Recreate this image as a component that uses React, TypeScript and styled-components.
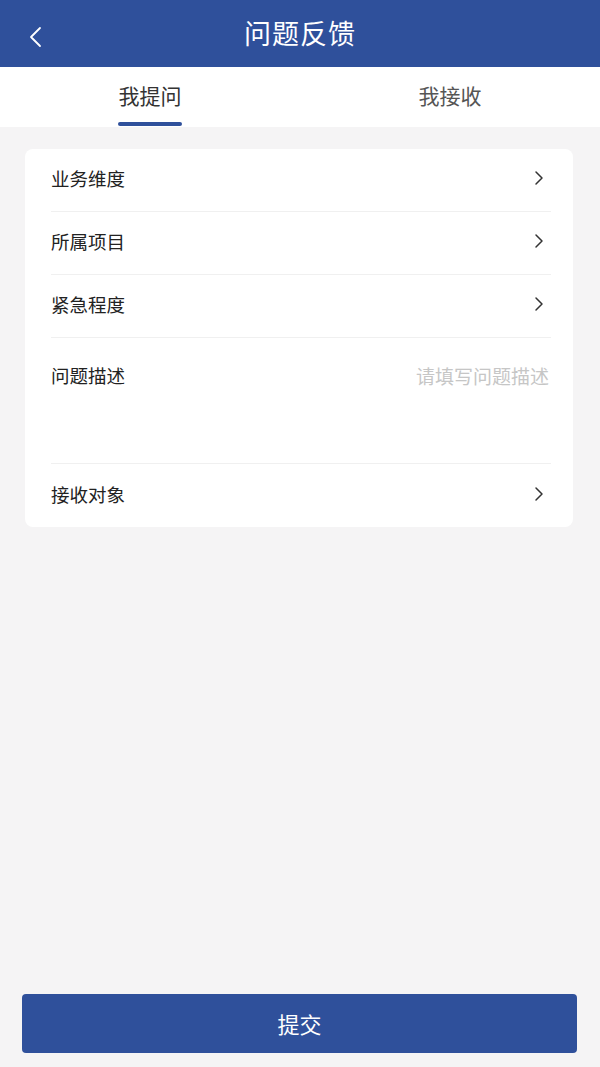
import React, {useState} from 'react';
import styled, {createGlobalStyle} from "styled-components";

const GlobalStyle = createGlobalStyle`
  * { box-sizing: border-box; }
  body {
    margin: 0;
    font-family: "Noto Sans CJK SC", "Noto Sans", sans-serif;
    background: #f5f4f5;
  }
`

type RowType = {
    label: string;
    arrow?: boolean;
    placeholder?: string;
}

const rows: RowType[] = [
    {label: '业务维度', arrow: true},
    {label: '所属项目', arrow: true},
    {label: '紧急程度', arrow: true},
    {label: '问题描述', placeholder: '请填写问题描述'},
    {label: '接收对象', arrow: true},
]

const Chevron = () => (
    <svg width="12" height="16" viewBox="0 0 12 16" fill="none">
        <path d="M3 2 L9 8 L3 14" stroke="#333" strokeWidth="1.5" strokeLinecap="round" strokeLinejoin="round"/>
    </svg>
)

const App = () => {
    const [tab, setTab] = useState(0);

    return (
        <Page>
            <GlobalStyle/>
            <Header>
                <BackBtn>
                    <svg width="18" height="22" viewBox="0 0 18 22" fill="none">
                        <path d="M13 2 L4 11 L13 20" stroke="#fff" strokeWidth="1.8" strokeLinecap="round" strokeLinejoin="round"/>
                    </svg>
                </BackBtn>
                <Title>问题反馈</Title>
            </Header>
            <Tabs>
                {['我提问', '我接收'].map((t, i) => (
                    <Tab key={t} active={i === tab} onClick={() => setTab(i)}>{t}</Tab>
                ))}
            </Tabs>
            <Card>
                {rows.map((row, i) => (
                    <Row key={row.label} tall={!!row.placeholder} last={i === rows.length - 1}>
                        <Label>{row.label}</Label>
                        {row.placeholder && <Placeholder>{row.placeholder}</Placeholder>}
                        {row.arrow && <Chevron/>}
                    </Row>
                ))}
            </Card>
            <Footer>
                <SubmitBtn>提交</SubmitBtn>
            </Footer>
        </Page>
    );
};

export default App;

const Page = styled.div`
  min-height: 1067px;
  display: flex;
  flex-direction: column;
  background: #f5f4f5;
`
const Header = styled.div`
  height: 67px;
  background: #2f509b;
  display: flex;
  align-items: center;
  justify-content: center;
  position: relative;
  padding-bottom: 2px;
`
const BackBtn = styled.div`
  position: absolute;
  left: 27px;
  top: 26px;
  display: flex;
`
const Title = styled.h1`
  margin: 0;
  font-size: 27px;
  font-weight: 400;
  color: #ffffff;
  letter-spacing: 1px;
`
const Tabs = styled.div`
  height: 60px;
  background: #ffffff;
  display: flex;
`
const Tab = styled.div<{ active: boolean }>`
  flex: 1;
  display: flex;
  align-items: center;
  justify-content: center;
  padding-bottom: 4px;
  font-size: 21px;
  color: ${p => p.active ? '#333333' : '#555555'};
  position: relative;
  cursor: pointer;

  &::after {
    content: '';
    display: ${p => p.active ? 'block' : 'none'};
    position: absolute;
    bottom: 1px;
    left: 50%;
    transform: translateX(-50%);
    width: 64px;
    height: 4px;
    border-radius: 2px;
    background: #2f509b;
  }
`
const Card = styled.div`
  margin: 22px 27px 0 25px;
  background: #ffffff;
  border-radius: 8px;
  padding: 0 22px 0 26px;
`
const Row = styled.div<{ tall: boolean; last: boolean }>`
  height: ${p => p.tall ? '126px' : '63px'};
  display: flex;
  justify-content: space-between;
  align-items: ${p => p.tall ? 'flex-start' : 'center'};
  padding: ${p => p.tall ? '24px 2px 0 0' : '0 6px 4px 0'};
  border-bottom: ${p => p.last ? 'none' : '1px solid #f0f0f0'};
`
const Label = styled.span`
  font-size: 18.5px;
  color: #222222;
`
const Placeholder = styled.span`
  font-size: 19px;
  color: #c6c6c6;
`
const Footer = styled.div`
  margin-top: auto;
  padding: 0 23px 14px 22px;
`
const SubmitBtn = styled.button`
  width: 100%;
  height: 59px;
  border: none;
  border-radius: 4px;
  background: #2f509b;
  color: #ffffff;
  font-size: 22px;
  font-family: "Noto Sans CJK SC", sans-serif;
  padding-bottom: 3px;
  cursor: pointer;
`
